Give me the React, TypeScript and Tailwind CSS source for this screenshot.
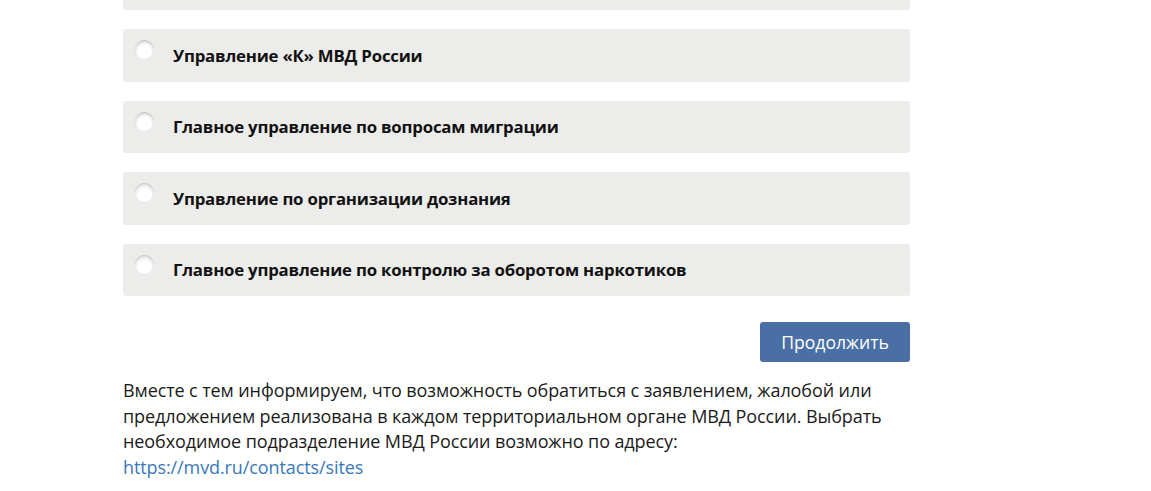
import React from "react";

const items = [
  "Управление «К» МВД России",
  "Главное управление по вопросам миграции",
  "Управление по организации дознания",
  "Главное управление по контролю за оборотом наркотиков",
];

function Radio() {
  return (
    <span className="mt-[11px] block h-[19px] w-[19px] shrink-0 self-start rounded-full bg-[radial-gradient(circle_at_50%_65%,#ffffff_40%,#e8e8e8_70%,#c4c4c4_100%)] shadow-[inset_0_1px_2px_rgba(0,0,0,0.15)]" />
  );
}

export default function App() {
  return (
    <div className="min-h-[491px] bg-white font-['Open_Sans','Noto_Sans',sans-serif] text-[#1a1a1a]">
      <div className="ml-[123px] w-[787px] pt-0">
        <div className="mt-[-42px] h-[52px] rounded-[3px] bg-[#ececea]" />
        <div className="mt-[19px] flex flex-col gap-[19px]">
          {items.map((t) => (
            <div
              key={t}
              className="flex h-[52.5px] items-center gap-[19px] rounded-[3px] bg-[#ececea] pl-[12px]"
            >
              <Radio />
              <span className="text-[16.8px] font-bold tracking-[-0.2px] text-[#111]">{t}</span>
            </div>
          ))}
        </div>
        <div className="mt-[26px] flex justify-end">
          <button className="h-[40px] w-[150px] rounded-[3px] bg-[#4a6fa5] text-[17.6px] text-white">
            Продолжить
          </button>
        </div>
        <p className="mt-[16px] text-[18px] leading-[25.7px] tracking-[-0.1px] text-[#1a1a1a]">
          Вместе с тем информируем, что возможность обратиться с заявлением, жалобой или
          предложением реализована в каждом территориальном органе МВД России. Выбрать
          необходимое подразделение МВД России возможно по адресу:
          <br />
          <a className="text-[#3a78b8]" href="#">https://mvd.ru/contacts/sites</a>
        </p>
      </div>
    </div>
  );
}
